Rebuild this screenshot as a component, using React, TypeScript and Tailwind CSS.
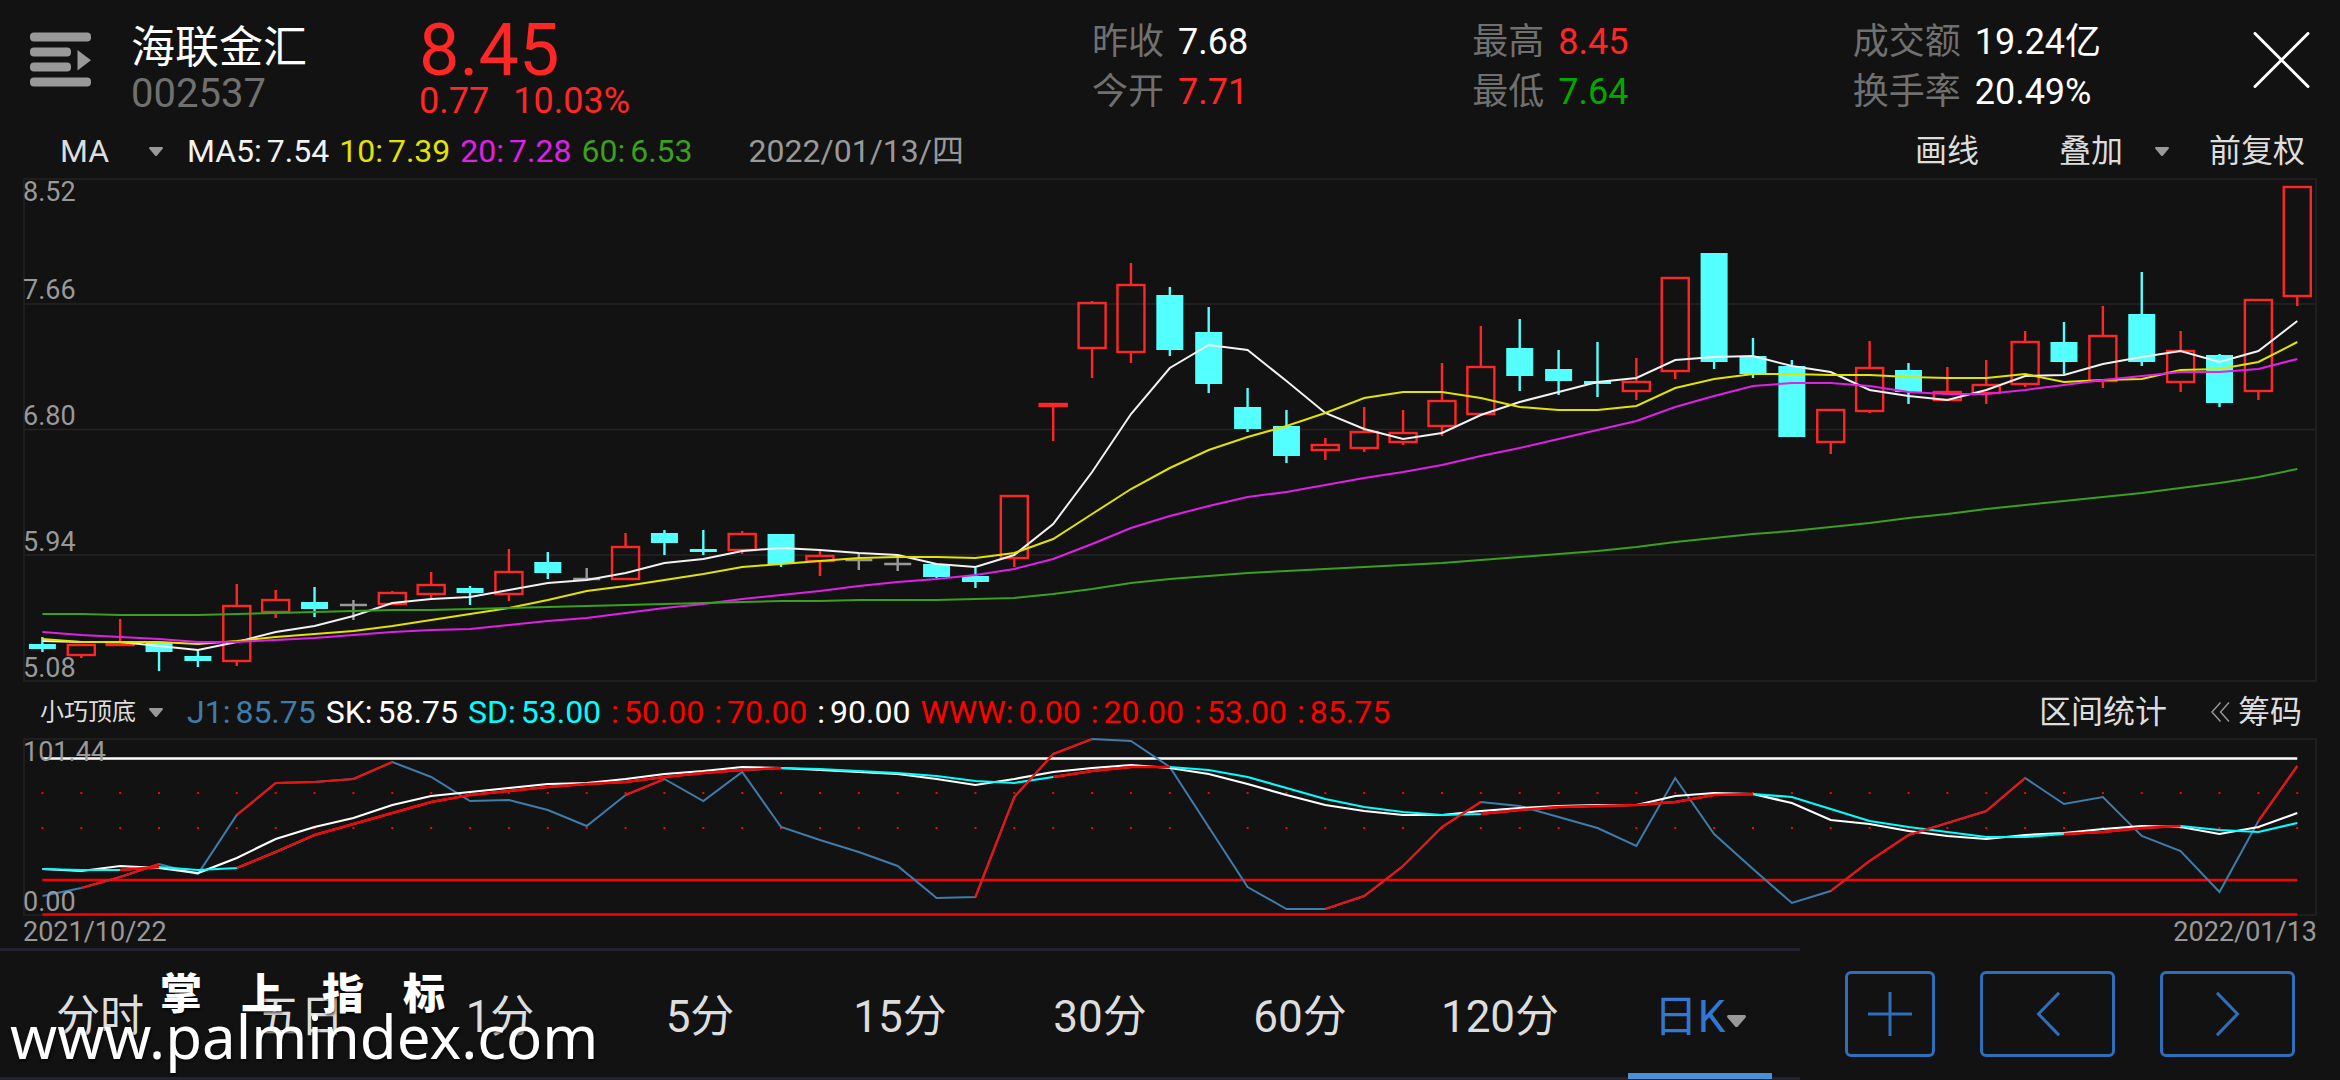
type Kind = 'up' | 'down' | 'flat'
type Candle = [kind: Kind, high: number, top: number, bottom: number, low: number]

const STEP = 38.877
const FIRST = 19.4
const px = (i: number) => FIRST + i * STEP

// [kind, high, body top, body bottom, low] in chart units
const candles: Candle[] = [
  ['down', 637, 644, 649, 652],
  ['up', 645, 645, 655, 658],
  ['up', 619, 644, 645, 645],
  ['down', 642, 642, 652, 671],
  ['down', 650, 656, 661, 667],
  ['up', 584, 606, 661, 666],
  ['up', 590, 600, 612, 618],
  ['down', 587, 602, 609, 617],
  ['flat', 600, 605, 605, 620],
  ['up', 591, 593, 604, 604],
  ['up', 572, 585, 594, 598],
  ['down', 586, 588, 593, 605],
  ['up', 549, 572, 594, 601],
  ['down', 552, 562, 573, 579],
  ['flat', 568, 579, 579, 581],
  ['up', 533, 547, 579, 579],
  ['down', 530, 533, 543, 555],
  ['down', 530, 549, 552, 555],
  ['up', 531, 534, 550, 554],
  ['down', 534, 534, 564, 567],
  ['up', 550, 556, 561, 576],
  ['flat', 553, 560, 560, 570],
  ['flat', 557, 564, 564, 571],
  ['down', 564, 564, 577, 578],
  ['down', 568, 576, 582, 588],
  ['up', 496, 496, 558, 567],
  ['up', 404, 404, 406, 441],
  ['up', 301, 303, 348, 378],
  ['up', 263, 285, 352, 363],
  ['down', 287, 295, 350, 356],
  ['down', 307, 332, 384, 393],
  ['down', 388, 407, 429, 432],
  ['down', 410, 426, 456, 463],
  ['up', 438, 445, 450, 460],
  ['up', 407, 432, 448, 452],
  ['up', 410, 433, 442, 445],
  ['up', 363, 401, 426, 436],
  ['up', 326, 367, 414, 414],
  ['down', 319, 348, 376, 391],
  ['down', 350, 369, 381, 395],
  ['down', 342, 381, 384, 397],
  ['up', 358, 382, 391, 400],
  ['up', 278, 278, 371, 379],
  ['down', 253, 253, 362, 369],
  ['down', 338, 356, 374, 378],
  ['down', 360, 366, 437, 437],
  ['up', 409, 410, 442, 454],
  ['up', 341, 368, 411, 413],
  ['down', 363, 370, 392, 404],
  ['up', 367, 392, 400, 400],
  ['up', 360, 385, 393, 404],
  ['up', 331, 342, 384, 387],
  ['down', 322, 342, 362, 374],
  ['up', 306, 336, 381, 388],
  ['down', 272, 314, 362, 366],
  ['up', 331, 351, 382, 392],
  ['down', 354, 355, 403, 407],
  ['up', 300, 300, 391, 400],
  ['up', 187, 187, 296, 306],
]

const averages = [
  {
    color: '#f2f2f2',
    data: [
      641, 642, 642, 646, 650, 642, 632, 626, 616, 603, 599, 597, 590, 583, 580, 573, 563, 559, 551, 548,
      550, 553, 555, 564, 567, 555, 524, 472, 414, 368, 345, 350, 381, 413, 429, 439, 433, 415, 402, 392,
      382, 378, 360, 357, 356, 366, 372, 390, 396, 400, 390, 376, 375, 364, 357, 351, 362, 351, 321,
    ],
  },
  {
    color: '#e3e300',
    data: [
      639, 642, 642, 642, 644, 641, 637, 634, 631, 626, 620, 614, 608, 600, 591, 586, 580, 574, 567, 564,
      561, 558, 557, 557, 558, 553, 539, 514, 489, 468, 450, 437, 426, 413, 398, 392, 392, 398, 407, 410,
      410, 406, 388, 379, 374, 374, 375, 375, 377, 378, 378, 374, 382, 380, 379, 370, 369, 362, 342,
    ],
  },
  {
    color: '#e020e8',
    data: [
      632, 635, 637, 639, 642, 642, 640, 638, 635, 632, 630, 629, 625, 621, 618, 613, 608, 604, 599, 595,
      591, 586, 582, 579, 575, 569, 559, 544, 528, 516, 506, 497, 492, 485, 478, 472, 465, 456, 448, 439,
      430, 421, 407, 396, 386, 383, 383, 386, 392, 394, 394, 390, 385, 380, 376, 372, 372, 369, 359,
    ],
  },
  {
    color: '#3aa01e',
    data: [
      614, 614, 615, 615, 615, 614, 613, 612, 611, 610, 610, 609, 608, 607, 606, 605, 604, 603, 602, 601,
      601, 600, 600, 600, 599, 598, 594, 589, 583, 579, 576, 573, 571, 569, 567, 565, 563, 560, 557, 554,
      551, 547, 542, 538, 534, 531, 527, 523, 518, 514, 509, 505, 501, 497, 493, 488, 483, 477, 469,
    ],
  },
]

const jLine = [
  896, 888, 877, 864, 874, 815, 783, 782, 779, 762, 777, 801, 800, 810, 826, 795, 779, 801, 772, 827,
  840, 852, 866, 898, 897, 797, 754, 739, 741, 767, 827, 887, 909, 909, 896, 866, 827, 802, 806, 817,
  828, 846, 778, 834, 869, 903, 891, 861, 835, 823, 811, 778, 804, 797, 836, 851, 892, 821, 766,
]

const skLine = [
  869, 871, 866, 868, 873, 858, 839, 827, 818, 805, 796, 792, 788, 784, 783, 779, 774, 771, 767, 768,
  770, 772, 774, 779, 785, 779, 772, 768, 765, 768, 774, 784, 795, 805, 811, 815, 815, 811, 808, 806,
  805, 805, 796, 793, 794, 803, 820, 824, 831, 836, 839, 835, 833, 829, 826, 827, 834, 827, 813,
]

const sdLine = [
  869, 870, 870, 867, 870, 868, 852, 835, 824, 813, 802, 795, 791, 787, 784, 782, 777, 773, 770, 768,
  769, 771, 773, 776, 781, 783, 777, 771, 767, 767, 770, 777, 788, 799, 807, 812, 815, 814, 810, 807,
  806, 805, 802, 795, 794, 797, 809, 821, 827, 832, 837, 837, 834, 832, 828, 826, 830, 832, 823,
]

// index ranges where the line is rising and turns red
const jRising = [[1, 3], [5, 9], [15, 16], [24, 27], [33, 37], [46, 51], [57, 58]]
const sdRising = [[2, 3], [5, 19], [26, 29], [37, 44], [52, 55]]

const stats = [
  [
    { label: '昨收', value: '7.68', color: 'text-white' },
    { label: '今开', value: '7.71', color: 'text-[#ff2626]' },
  ],
  [
    { label: '最高', value: '8.45', color: 'text-[#ff2626]' },
    { label: '最低', value: '7.64', color: 'text-[#00a800]' },
  ],
  [
    { label: '成交额', value: '19.24亿', color: 'text-white' },
    { label: '换手率', value: '20.49%', color: 'text-white' },
  ],
]

type LegendItem = { name: string; value: string; color: string }

const maLegend: LegendItem[] = [
  { name: 'MA5:', value: '7.54', color: 'text-[#f2f2f2]' },
  { name: '10:', value: '7.39', color: 'text-[#e3e300]' },
  { name: '20:', value: '7.28', color: 'text-[#e020e8]' },
  { name: '60:', value: '6.53', color: 'text-[#3aa01e]' },
]

const subLegend: LegendItem[] = [
  { name: 'J1:', value: '85.75', color: 'text-[#3f7caa]' },
  { name: 'SK:', value: '58.75', color: 'text-white' },
  { name: 'SD:', value: '53.00', color: 'text-[#00ffff]' },
  { name: ':', value: '50.00', color: 'text-[#ff0000]' },
  { name: ':', value: '70.00', color: 'text-[#ff0000]' },
  { name: ':', value: '90.00', color: 'text-white' },
  { name: 'WWW:', value: '0.00', color: 'text-[#ff0000]' },
  { name: ':', value: '20.00', color: 'text-[#ff0000]' },
  { name: ':', value: '53.00', color: 'text-[#ff0000]' },
  { name: ':', value: '85.75', color: 'text-[#ff0000]' },
]

const periods = ['分时', '五日', '1分', '5分', '15分', '30分', '60分', '120分']

function points(data: number[], from = 0, to = data.length - 1) {
  return data
    .slice(from, to + 1)
    .map((y, i) => `${px(from + i).toFixed(1)},${y}`)
    .join(' ')
}

function Caret({ className }: { className: string }) {
  return (
    <svg viewBox="0 0 14 9" className={`${className} pointer-events-none shrink-0`} aria-hidden="true">
      <path d="M1.2 0h11.6c1 0 1.5 1 .9 1.8L8 8.4c-.5.7-1.5.7-2 0L.3 1.8C-.3 1 .2 0 1.2 0Z" fill="#999" />
    </svg>
  )
}

function Legend({ items }: { items: LegendItem[] }) {
  return (
    <p className="flex gap-2.5 whitespace-nowrap">
      {items.map((item, i) => (
        <span key={i} className={`flex gap-[5px] ${item.color}`}>
          <span>{item.name}</span>
          <span>{item.value}</span>
        </span>
      ))}
    </p>
  )
}

function CandleShape({ candle, x }: { candle: Candle; x: number }) {
  const [kind, high, top, bottom, low] = candle
  if (kind === 'flat') {
    return <path d={`M${x - 13.5} ${top}h27M${x} ${high}V${low}`} stroke="#999" strokeWidth="2.4" />
  }
  if (kind === 'down') {
    return (
      <g fill="#54ffff">
        <rect x={x - 13.5} y={top} width="27" height={bottom - top} />
        <rect x={x - 1.2} y={high} width="2.4" height={low - high} />
      </g>
    )
  }
  return (
    <g fill="none" stroke="#ff2626" strokeWidth="2.4">
      <rect x={x - 13.5} y={top} width="27" height={bottom - top} />
      <path d={`M${x} ${high}V${top}M${x} ${bottom}V${low}`} />
    </g>
  )
}

function PriceChart() {
  return (
    <div className="relative min-h-0 flex-[500] border-2 border-[#1e1e1e]">
      <svg viewBox="2 180 2290 500" preserveAspectRatio="none" className="absolute inset-0 h-full w-full">
        {[304, 429.5, 555].map((y) => (
          <line key={y} x1="0" x2="2294" y1={y} y2={y} stroke="#242424" strokeWidth="1.6" />
        ))}
        {candles.map((candle, i) => (
          <CandleShape key={i} candle={candle} x={px(i)} />
        ))}
        {averages.map((ma) => (
          <polyline key={ma.color} points={points(ma.data)} fill="none" stroke={ma.color} strokeWidth="2" />
        ))}
      </svg>
      <div className="absolute -inset-0.5 grid grid-rows-4 text-[27px] leading-7 text-[#999]">
        <div className="flex flex-col justify-between">
          <span>8.52</span>
          <span>7.66</span>
        </div>
        <span className="self-end">6.80</span>
        <span className="self-end">5.94</span>
        <span className="self-end">5.08</span>
      </div>
    </div>
  )
}

function IndicatorChart() {
  return (
    <div className="relative min-h-0 flex-[174] border-2 border-[#1e1e1e]">
      <svg
        viewBox="2 740 2290 174"
        preserveAspectRatio="none"
        className="absolute inset-0 h-full w-full overflow-visible"
        fill="none"
        strokeWidth="2"
      >
        <line x1={px(0)} x2={px(58)} y1="758.5" y2="758.5" stroke="#fff" strokeWidth="2.6" />
        <line x1={px(0)} x2={px(58)} y1="880" y2="880" stroke="#f00" strokeWidth="2.4" />
        <line x1={px(0)} x2={px(58)} y1="914.5" y2="914.5" stroke="#f00" strokeWidth="2.4" />
        {candles.map((_, i) => (
          <path key={i} d={`M${px(i) - 1} 793h2m-2 35h2`} stroke="#f00" />
        ))}
        <polyline points={points(jLine)} stroke="#3f7caa" />
        <polyline points={points(skLine)} stroke="#fff" strokeWidth="2.2" />
        <polyline points={points(sdLine)} stroke="#0ff" strokeWidth="2.2" />
        {sdRising.map(([from, to]) => (
          <polyline key={from} points={points(sdLine, from, to)} stroke="#f00" strokeWidth="2.4" />
        ))}
        {jRising.map(([from, to]) => (
          <polyline key={from} points={points(jLine, from, to)} stroke="#f01010" strokeWidth="2.2" />
        ))}
      </svg>
      <div className="absolute -inset-0.5 flex flex-col justify-between text-[27px] leading-7 text-[#999]">
        <span>101.44</span>
        <span>0.00</span>
      </div>
    </div>
  )
}

export default function App() {
  return (
    <div className="relative flex h-screen min-h-[720px] flex-col overflow-hidden bg-[#121212] font-[Roboto,'Noto_Sans_CJK_SC',sans-serif] text-[#ddd]">
      {/* Quote header */}
      <header className="flex h-[122px] shrink-0 items-start px-[30px]">
        <button type="button" aria-label="列表" className="mt-8 shrink-0">
          <svg width="61" height="55" viewBox="0 0 61 55" fill="#999">
            <rect width="61" height="9" y="0.5" rx="4" />
            <rect width="41" height="9" y="15.5" rx="4" />
            <rect width="41" height="9" y="30.5" rx="4" />
            <rect width="61" height="9" y="45.5" rx="4" />
            <path d="M47.5 18v20.500L61 28.200Z" />
          </svg>
        </button>

        <div className="ml-10 w-72 shrink-0 pt-[25px] leading-[46px]">
          <h1 className="text-[44px] text-white">海联金汇</h1>
          <p className="text-[40px] text-[#707070]">002537</p>
        </div>

        <div className="w-[673px] shrink-0 pt-[25px] text-[#ff2626]">
          <p className="text-[72px] leading-[52px]">8.45</p>
          <p className="flex gap-6 text-[36px] leading-[48px]">
            <span>0.77</span>
            <span>10.03%</span>
          </p>
        </div>

        <div className="grid flex-1 grid-cols-3 pt-[17px] text-[36px] leading-[50px]">
          {stats.map((column, i) => (
            <dl key={i}>
              {column.map((stat) => (
                <div key={stat.label} className="flex gap-3.5 whitespace-nowrap">
                  <dt className="text-[#707070]">{stat.label}</dt>
                  <dd className={stat.color}>{stat.value}</dd>
                </div>
              ))}
            </dl>
          ))}
        </div>

        <button type="button" aria-label="关闭" className="mt-8 ml-5 shrink-0">
          <svg width="57" height="56" viewBox="0 0 57 56" stroke="#fff" strokeWidth="3" strokeLinecap="round">
            <path d="M2 1.500 55 54.500M55 1.500 2 54.500" />
          </svg>
        </button>
      </header>

      {/* Moving averages */}
      <div className="flex h-14 shrink-0 items-center pt-0.5 pr-[35px] pl-[60px] text-[32px] leading-10 whitespace-nowrap">
        <div className="flex items-center">
          <select aria-label="主图指标" className="w-[89px] appearance-none">
            <option>MA</option>
          </select>
          <Caret className="w-3.5" />
        </div>
        <div className="ml-6">
          <Legend items={maLegend} />
        </div>
        <time dateTime="2022-01-13" className="ml-14 text-[#999]">
          2022/01/13/四
        </time>
        <button type="button" className="ml-auto">
          画线
        </button>
        <div className="ml-20 flex items-center">
          <select aria-label="叠加" className="w-24 appearance-none">
            <option>叠加</option>
          </select>
          <Caret className="w-3.5" />
        </div>
        <button type="button" className="ml-10">
          前复权
        </button>
      </div>

      <main className="flex min-h-0 flex-1 flex-col px-[23px]">
        <PriceChart />

        <div className="flex h-14 shrink-0 items-center pt-1 pr-[15px] pl-[17px] text-[32px] leading-10 whitespace-nowrap">
          <div className="flex items-center">
            <select aria-label="副图指标" className="w-[109px] appearance-none text-[24px]">
              <option>小巧顶底</option>
            </select>
            <Caret className="w-3.5" />
          </div>
          <div className="ml-6">
            <Legend items={subLegend} />
          </div>
          <button type="button" className="ml-auto">
            区间统计
          </button>
          <button type="button" className="ml-11 flex items-center gap-2">
            <svg width="19" height="20" viewBox="0 0 19 20" fill="none" stroke="#999" strokeWidth="1.400" aria-hidden="true">
              <path d="M9.500.5 1 10l8.500 9.500M18 .5 9.500 10l8.500 9.500" />
            </svg>
            筹码
          </button>
        </div>

        <IndicatorChart />

        <div className="flex h-8 shrink-0 justify-between text-[27px] leading-8 text-[#999]">
          <time dateTime="2021-10-22">2021/10/22</time>
          <time dateTime="2022-01-13">2022/01/13</time>
        </div>
      </main>

      {/* Periods */}
      <footer className="flex h-[132px] shrink-0">
        <nav className="flex flex-1 border-y-3 border-[#222230] text-[44px]">
          {periods.map((period) => (
            <button key={period} type="button" className="flex-1 pt-1.5">
              {period}
            </button>
          ))}
          <button type="button" className="relative flex flex-1 items-center justify-center gap-0.5 pt-1.5 text-[#3278d2]">
            日K
            <Caret className="mt-2 w-[19px]" />
            <span className="absolute inset-x-7 -bottom-0.5 h-1.5 bg-[#4a90d9]" />
          </button>
        </nav>
        <div className="flex shrink-0 items-center gap-[45px] px-[45px] text-[#2f6fba]">
          <button type="button" aria-label="添加" className="flex h-[86px] w-[90px] items-center justify-center rounded-md border-3">
            <svg width="44" height="44" viewBox="0 0 44 44" stroke="currentColor" strokeWidth="3">
              <path d="M0 22h44M22 0v44" />
            </svg>
          </button>
          <button type="button" aria-label="上一个" className="flex h-[86px] w-[135px] items-center justify-center rounded-md border-3">
            <svg width="24" height="44" viewBox="0 0 24 44" fill="none" stroke="currentColor" strokeWidth="3">
              <path d="M23 .8 2.500 22 23 43.200" />
            </svg>
          </button>
          <button type="button" aria-label="下一个" className="flex h-[86px] w-[135px] items-center justify-center rounded-md border-3">
            <svg width="24" height="44" viewBox="0 0 24 44" fill="none" stroke="currentColor" strokeWidth="3">
              <path d="M1 .8 21.500 22 1 43.200" />
            </svg>
          </button>
        </div>
      </footer>

      {/* Watermark */}
      <div className="pointer-events-none absolute bottom-[18px] left-2.5 text-white [text-shadow:1px_2px_3px_rgb(0_0_0/0.6)]">
        <p className="ml-[150px] flex gap-[39px] text-[42px] leading-[30px] font-black">
          {['掌', '上', '指', '标'].map((char) => (
            <span key={char}>{char}</span>
          ))}
        </p>
        <p className="font-['Noto_Sans','Open_Sans',sans-serif] text-[60px] leading-[52px]">www.palmindex.com</p>
      </div>
    </div>
  )
}
